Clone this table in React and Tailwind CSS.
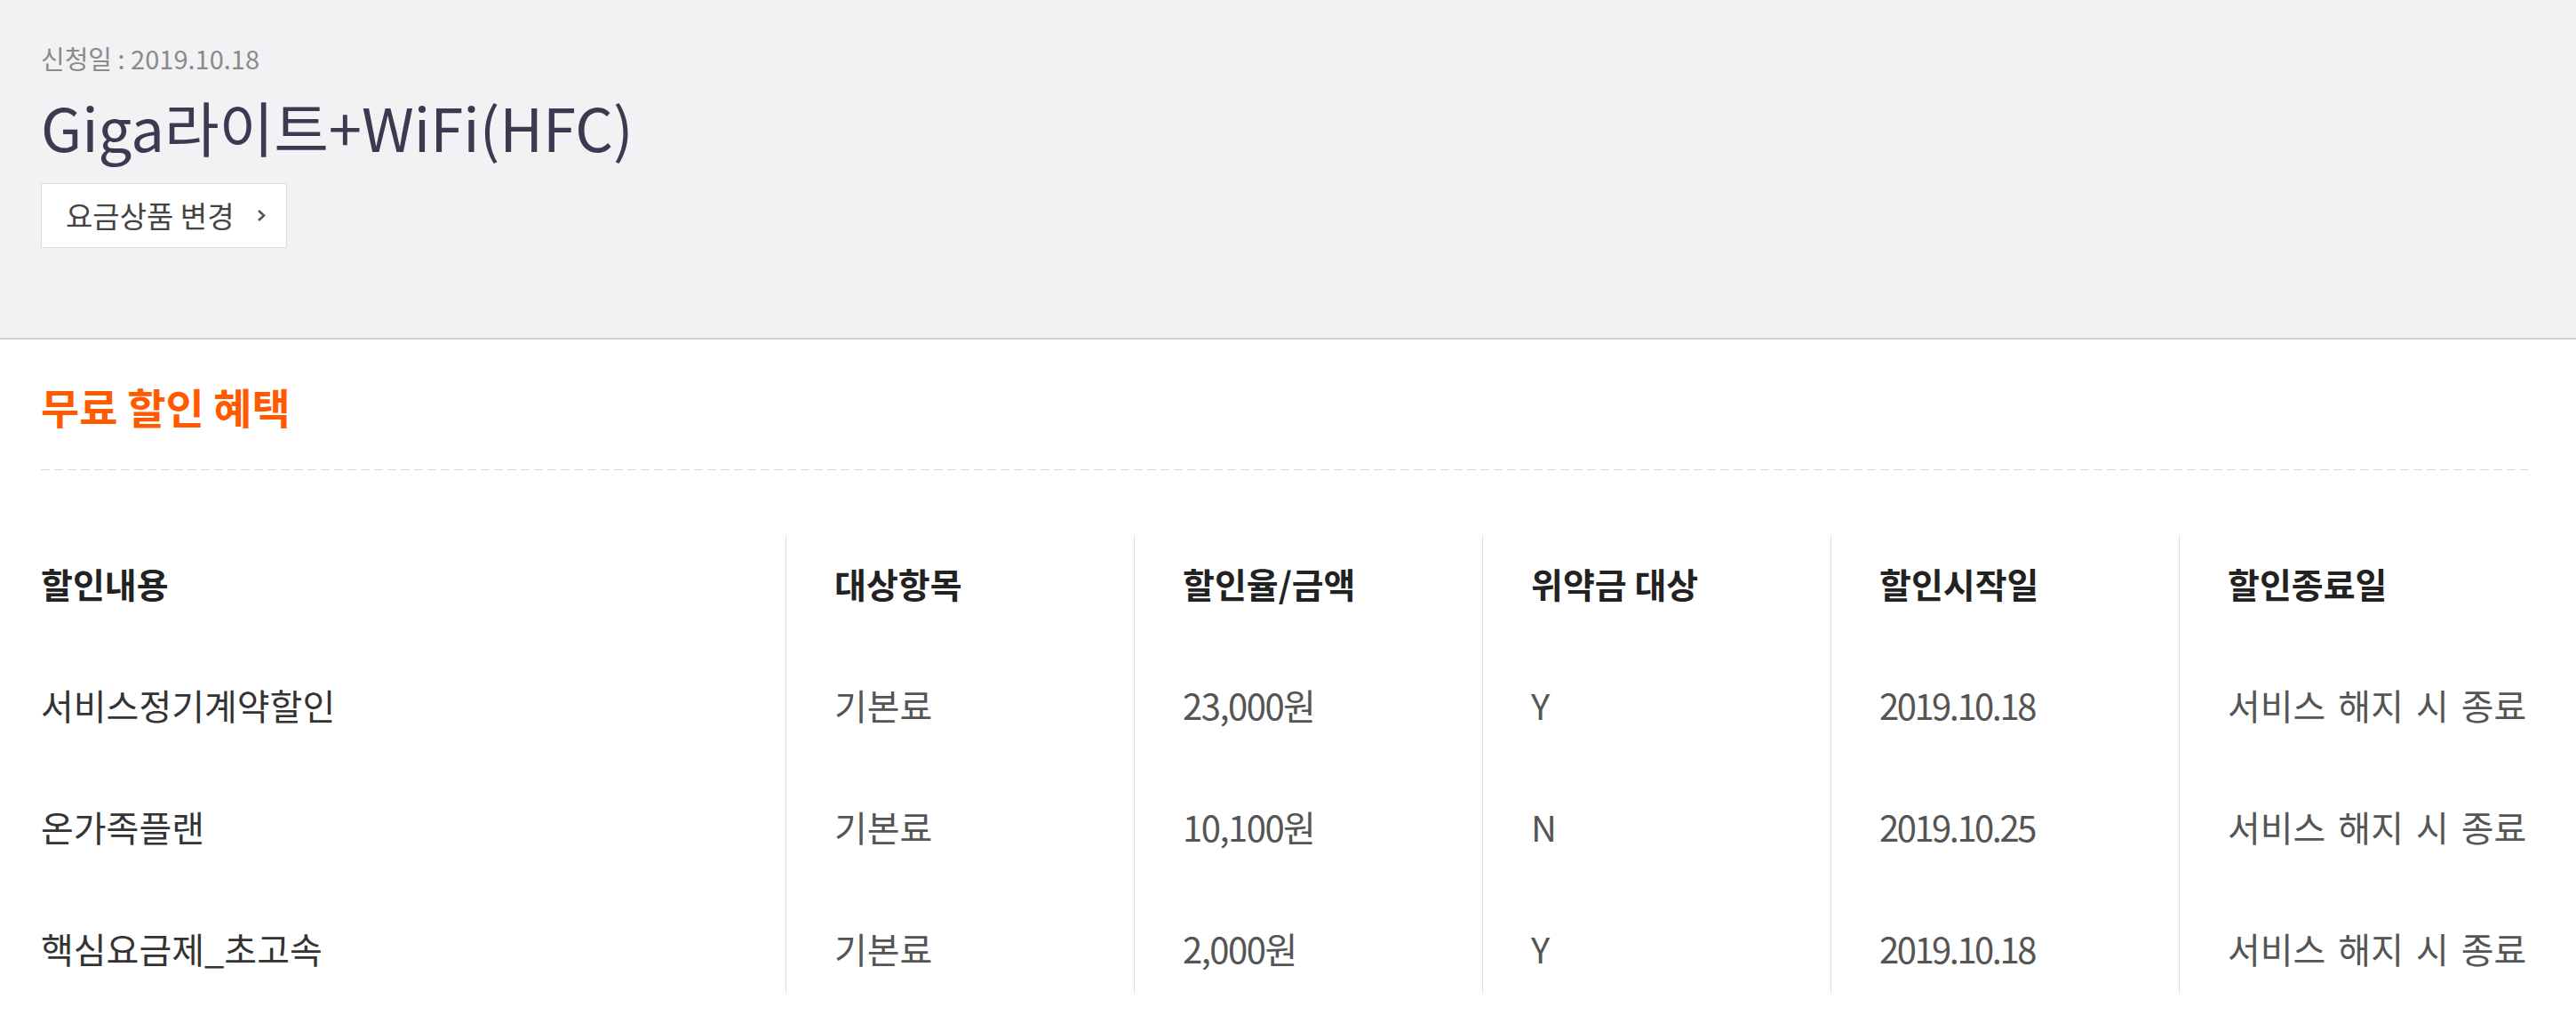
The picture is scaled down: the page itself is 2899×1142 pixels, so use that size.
import React from 'react';

const columns = ['할인내용', '대상항목', '할인율/금액', '위약금 대상', '할인시작일', '할인종료일'];

const rows = [
    ['서비스정기계약할인', '기본료', '23,000원', 'Y', '2019.10.18', '서비스 해지 시 종료'],
    ['온가족플랜', '기본료', '10,100원', 'N', '2019.10.25', '서비스 해지 시 종료'],
    ['핵심요금제_초고속', '기본료', '2,000원', 'Y', '2019.10.18', '서비스 해지 시 종료'],
];

// vertical padding per row index: header, middle rows, last row
const rowPad = ['pt-[28px] pb-[43px]', 'pt-[44px] pb-[43px]', 'pt-[44px] pb-[43px]', 'pt-[44px] pb-[25px]'];

function Cell({ col, row, bold, children }) {
    return (
        <div
            className={[
                'leading-[50px] whitespace-nowrap',
                rowPad[row],
                col === 0 ? 'pl-0' : 'pl-[54px] border-l border-[#dedede]',
                col === 5 ? '[word-spacing:5px]' : '',
                !bold && col === 2 ? 'tracking-[-1.5px]' : '',
                !bold && col === 4 ? 'tracking-[-2.5px]' : '',
                bold ? 'text-[39px] font-bold text-[#222]' : col === 0 ? 'text-[40px] text-[#333]' : 'text-[40px] text-[#555]',
            ].join(' ')}
        >
            {children}
        </div>
    );
}

export default function App() {
    return (
        <div className="min-h-screen bg-white font-['Noto_Sans_CJK_KR','Noto_Sans',sans-serif]">
            {/* Product header */}
            <div className="bg-[#f2f2f4] border-b-2 border-[#d0d0d2] pl-[46px] pt-[45px] h-[382px]">
                <p className="text-[29px] leading-[40px] text-[#8a8a8a]">신청일 : 2019.10.18</p>
                <h1 className="mt-[17px] text-[67px] leading-[80px] text-[#3a3a50]">Giga라이트+WiFi(HFC)</h1>
                <button className="mt-[24px] flex items-center h-[73px] w-[277px] pl-[27px] bg-white border border-[#dcdcdc] text-[33px] text-[#444]">
                    <span>요금상품 변경</span>
                    <svg className="ml-[25px]" width="10" height="15" viewBox="0 0 10 15">
                        <polyline points="2,2 8,7.5 2,13" fill="none" stroke="#555" strokeWidth="2.6" />
                    </svg>
                </button>
            </div>

            {/* Discount benefits */}
            <div className="pl-[46px] pr-[54px] pt-[47px]">
                <h2 className="text-[47px] leading-[56px] font-bold text-[#ff5a00]">무료 할인 혜택</h2>
                <div className="mt-[43px] h-px bg-[repeating-linear-gradient(90deg,#d9d9d9_0_10px,transparent_10px_15px)]" />

                <div className="mt-[74px] grid grid-cols-[838px_392px_392px_392px_392px_1fr]">
                    {columns.map((c, i) => (
                        <Cell key={c} col={i} row={0} bold>
                            {c}
                        </Cell>
                    ))}
                    {rows.map((r, ri) =>
                        r.map((v, ci) => (
                            <Cell key={`${ri}-${ci}`} col={ci} row={ri + 1}>
                                {v}
                            </Cell>
                        ))
                    )}
                </div>
            </div>
        </div>
    );
}
